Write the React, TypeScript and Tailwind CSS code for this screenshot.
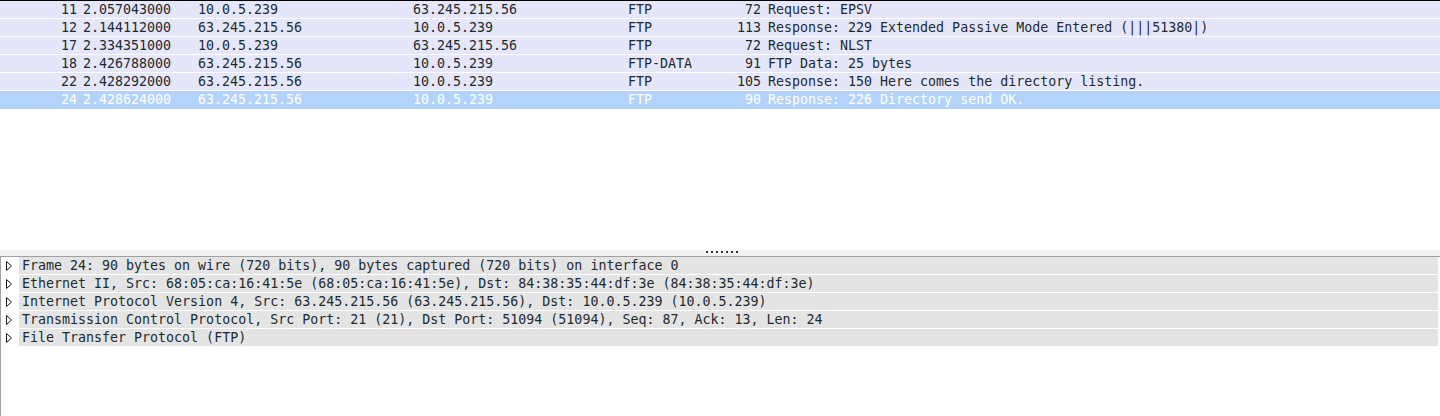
import React from 'react';

type Packet = {
  no: number;
  time: string;
  src: string;
  dst: string;
  proto: string;
  len: number;
  info: string;
};

const packets: Packet[] = [
  { no: 11, time: '2.057043000', src: '10.0.5.239', dst: '63.245.215.56', proto: 'FTP', len: 72, info: 'Request: EPSV' },
  { no: 12, time: '2.144112000', src: '63.245.215.56', dst: '10.0.5.239', proto: 'FTP', len: 113, info: 'Response: 229 Extended Passive Mode Entered (|||51380|)' },
  { no: 17, time: '2.334351000', src: '10.0.5.239', dst: '63.245.215.56', proto: 'FTP', len: 72, info: 'Request: NLST' },
  { no: 18, time: '2.426788000', src: '63.245.215.56', dst: '10.0.5.239', proto: 'FTP-DATA', len: 91, info: 'FTP Data: 25 bytes' },
  { no: 22, time: '2.428292000', src: '63.245.215.56', dst: '10.0.5.239', proto: 'FTP', len: 105, info: 'Response: 150 Here comes the directory listing.' },
  { no: 24, time: '2.428624000', src: '63.245.215.56', dst: '10.0.5.239', proto: 'FTP', len: 90, info: 'Response: 226 Directory send OK.' },
];

const details = [
  'Frame 24: 90 bytes on wire (720 bits), 90 bytes captured (720 bits) on interface 0',
  'Ethernet II, Src: 68:05:ca:16:41:5e (68:05:ca:16:41:5e), Dst: 84:38:35:44:df:3e (84:38:35:44:df:3e)',
  'Internet Protocol Version 4, Src: 63.245.215.56 (63.245.215.56), Dst: 10.0.5.239 (10.0.5.239)',
  'Transmission Control Protocol, Src Port: 21 (21), Dst Port: 51094 (51094), Seq: 87, Ack: 13, Len: 24',
  'File Transfer Protocol (FTP)',
];

const Expander = () => (
  <svg width="8" height="12" viewBox="0 0 8 12" className="shrink-0">
    <path d="M1.5 1.5 L6.5 6 L1.5 10.5 Z" fill="none" stroke="#1a1a1a" strokeWidth="1" />
  </svg>
);

export default function App() {
  const selected = 24;

  return (
    <div
      className="h-[416px] w-[1440px] flex flex-col bg-white overflow-hidden text-[13.3px] leading-[17px] text-[#1c2b30]"
      style={{ fontFamily: '"DejaVu Sans Mono", "Liberation Mono", monospace' }}
    >
      {/* Packet list */}
      <div className="flex-1 border-t border-black">
        {packets.map((p) => {
          const isSel = p.no === selected;
          return (
            <div
              key={p.no}
              className={
                isSel
                  ? 'flex h-[18px] bg-[#b4d3fb] text-white whitespace-pre'
                  : 'flex h-[18px] bg-[#e6e6fa] border-b border-white whitespace-pre'
              }
            >
              <div className="w-[80px] text-right pr-[3px]">{p.no}</div>
              <div className="w-[115px] pl-[3px]">{p.time}</div>
              <div className="w-[215px] pl-[3px]">{p.src}</div>
              <div className="w-[215px] pl-[3px]">{p.dst}</div>
              <div className="w-[80px] pl-[3px]">{p.proto}</div>
              <div className="w-[59px] text-right pr-[3px]">{p.len}</div>
              <div className="flex-1 pl-[4px]">{p.info}</div>
            </div>
          );
        })}
      </div>

      {/* Splitter */}
      <div className="h-[6px] bg-[#f2f2f2] flex justify-center pt-[1px]">
        <div className="flex gap-[3px] ml-[4px]">
          {[0, 1, 2, 3, 4, 5, 6].map((i) => (
            <div key={i} className="w-[2px] h-[2px] bg-[#333]" />
          ))}
        </div>
      </div>

      {/* Packet details */}
      <div className="h-[160px] border-t border-l border-[#a0a0a0] pr-[2px]">
        {details.map((d, i) => (
          <div
            key={i}
            className={
              i < details.length - 1
                ? 'flex items-center h-[18px] border-b border-white'
                : 'flex items-center h-[17px]'
            }
          >
            <div className="w-[18px] h-full flex items-center pl-[4px] bg-white">
              <Expander />
            </div>
            <div className="flex-1 h-full bg-[#e4e4e4] pl-[3px] whitespace-pre">{d}</div>
          </div>
        ))}
      </div>
    </div>
  );
}
